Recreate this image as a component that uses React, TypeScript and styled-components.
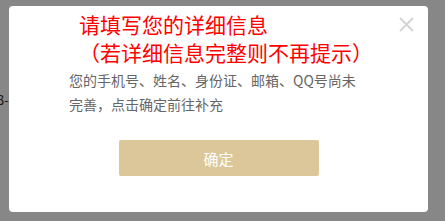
import React from 'react';
import styled, { createGlobalStyle } from 'styled-components';

const GlobalStyle = createGlobalStyle`
    html, body {
        margin: 0;
        padding: 0;
        width: 445px;
        height: 221px;
        overflow: hidden;
        font-family: "Noto Sans CJK SC", "Liberation Sans", sans-serif;
    }
`;

const Page = styled.div`
    width: 445px;
    height: 221px;
    background: #ffffff;
    position: relative;
`;

const PageText = styled.span`
    position: absolute;
    left: -3px;
    top: 90px;
    font-size: 13px;
    color: #333;
`;

const Mask = styled.div`
    position: absolute;
    inset: 0;
    background: rgba(0, 0, 0, 0.47);
    display: flex;
    align-items: flex-start;
    padding: 6px 17px 9px 9px;
    box-sizing: border-box;
`;

const Dialog = styled.div`
    position: relative;
    width: 419px;
    height: 206px;
    background: #ffffff;
    border-radius: 4px;
    display: flex;
    flex-direction: column;
    box-sizing: border-box;
    padding-top: 4px;
`;

const Close = styled.button`
    position: absolute;
    top: 11px;
    right: 14px;
    width: 15px;
    height: 15px;
    padding: 0;
    border: none;
    background: none;
    cursor: pointer;
    display: flex;
`;

const Title = styled.h2`
    margin: 0;
    padding-left: 70px;
    font-size: 21px;
    font-weight: normal;
    line-height: 28px;
    color: #ff0000;
`;

const Message = styled.p`
    margin: 2px 0 0;
    padding: 0 0 0 60px;
    width: 300px;
    font-size: 14px;
    line-height: 24px;
    color: #666666;
`;

const Footer = styled.div`
    display: flex;
    justify-content: center;
    margin-top: 24px;
`;

const Confirm = styled.button`
    width: 200px;
    height: 36px;
    border: none;
    border-radius: 2px;
    background-color: #dcc79b;
    color: #ffffff;
    font-family: inherit;
    font-size: 15px;
    cursor: pointer;
`;

const App = () => {
    return (
        <>
            <GlobalStyle />
            <Page>
                <PageText>3-</PageText>
                <Mask>
                    <Dialog>
                        <Close aria-label="关闭">
                            <svg width="15" height="15" viewBox="0 0 15 15">
                                <path d="M1 1L14 14M14 1L1 14" stroke="#d4d4d4" strokeWidth="1.8" />
                            </svg>
                        </Close>
                        <Title>
                            请填写您的详细信息
                            <br />
                            （若详细信息完整则不再提示）
                        </Title>
                        <Message>您的手机号、姓名、身份证、邮箱、QQ号尚未完善，点击确定前往补充</Message>
                        <Footer>
                            <Confirm>确定</Confirm>
                        </Footer>
                    </Dialog>
                </Mask>
            </Page>
        </>
    );
};

export default App;
